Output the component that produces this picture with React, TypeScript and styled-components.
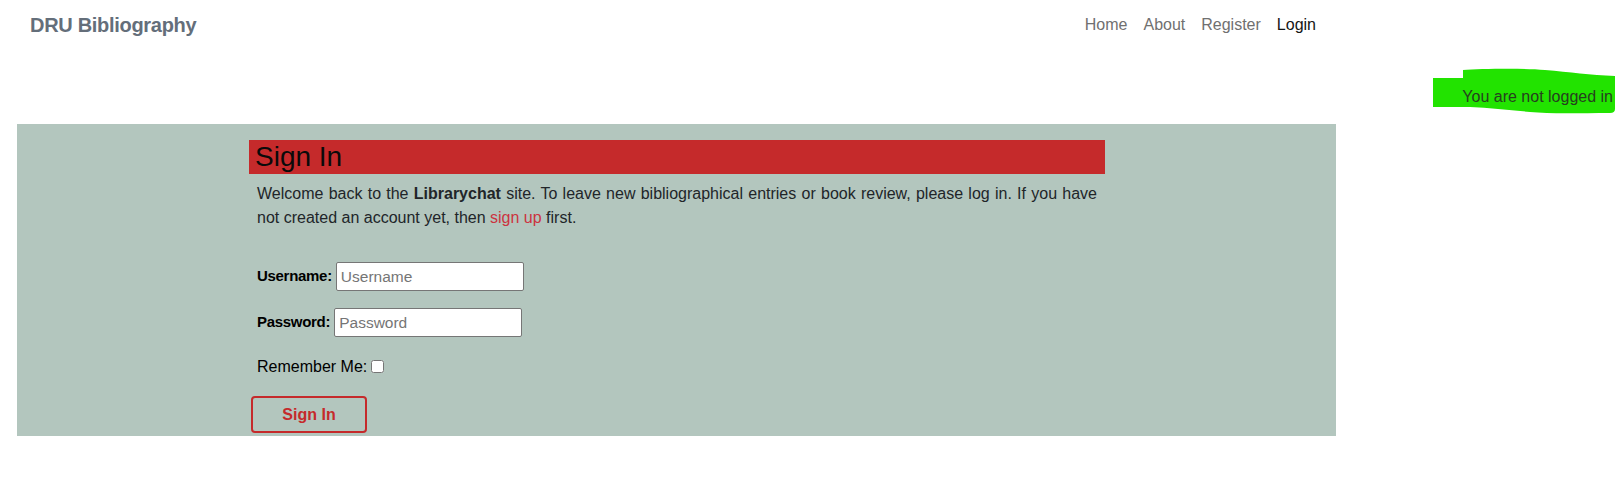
import React from "react";
import styled, { createGlobalStyle } from "styled-components";

const GlobalStyle = createGlobalStyle`
  html, body {
    margin: 0;
    padding: 0;
    background: #ffffff;
  }
  body {
    font-family: "Liberation Sans", Arial, sans-serif;
    font-size: 16px;
    line-height: 1.5;
    color: #212529;
  }
  * { box-sizing: border-box; }
`;

const Page = styled.div`
  width: 1623px;
  display: flex;
  flex-direction: column;
`;

const Navbar = styled.nav`
  width: 1336px;
  display: flex;
  justify-content: space-between;
  align-items: flex-start;
  padding: 10px 12px 16px 30px;
`;

const Brand = styled.a`
  font-size: 20px;
  line-height: 30px;
  font-weight: 700;
  letter-spacing: -0.3px;
  color: #646e7a;
  text-decoration: none;
`;

const NavList = styled.ul`
  list-style: none;
  margin: 3px 0 0;
  padding: 0;
  display: flex;
`;

const NavLink = styled.a<{ $active?: boolean }>`
  display: block;
  padding: 0 8px;
  font-size: 16px;
  line-height: 24px;
  color: ${(p) => (p.$active ? "#141414" : "#707070")};
  text-decoration: none;
`;

const StatusBar = styled.div`
  position: relative;
  display: flex;
  justify-content: flex-end;
  padding: 29px 10px 15px;
`;

const Highlight = styled.svg`
  position: absolute;
  right: 3px;
  top: 10px;
  width: 190px;
  height: 50px;
`;

const StatusText = styled.span`
  position: relative;
  font-size: 16px;
  line-height: 24px;
  color: #26401f;
`;

const Panel = styled.main`
  margin-left: 17px;
  width: 1319px;
  background: #b3c6be;
  padding: 16px 0 3px 232px;
`;

const Card = styled.section`
  width: 856px;
  display: flex;
  flex-direction: column;
`;

const Heading = styled.h3`
  margin: 0;
  background: #c52a2b;
  color: #0a0a0a;
  font-size: 28px;
  font-weight: 400;
  line-height: 34px;
  padding-left: 6px;
`;

const Intro = styled.p`
  margin: 8px 0 0;
  padding: 0 8px;
  font-size: 16px;
  line-height: 24px;
  text-align: justify;
  color: #212529;
`;

const RedLink = styled.a`
  color: #cc3340;
  text-decoration: none;
`;

const Form = styled.form`
  margin-top: 32px;
  display: flex;
  flex-direction: column;
  gap: 17px;
`;

const Row = styled.div`
  display: flex;
  align-items: center;
  gap: 4px;
  padding-left: 8px;
  min-height: 29px;
`;

const CheckRow = styled(Row)`
  min-height: 25px;
  line-height: 25px;
`;

const FieldLabel = styled.label<{ $bold?: boolean }>`
  font-size: ${(p) => (p.$bold ? "15px" : "16px")};
  font-weight: ${(p) => (p.$bold ? 700 : 400)};
  letter-spacing: ${(p) => (p.$bold ? "-0.3px" : "0")};
  color: #000000;
`;

const TextInput = styled.input`
  width: 188px;
  height: 29px;
  margin: 0;
  padding: 1px 4px;
  border: 1px solid #767676;
  border-radius: 2px;
  background: #ffffff;
  font-family: "Liberation Sans", Arial, sans-serif;
  font-size: 15.5px;
  color: #212529;
  &::placeholder {
    color: #757575;
  }
`;

const Checkbox = styled.input`
  width: 13px;
  height: 13px;
  margin: 0;
`;

const SubmitButton = styled.button`
  margin-left: 2px;
  width: 116px;
  height: 37px;
  border: 2px solid #c52a2b;
  border-radius: 4px;
  background: transparent;
  color: #c52a2b;
  font-family: "Liberation Sans", Arial, sans-serif;
  font-size: 16px;
  font-weight: 700;
  cursor: pointer;
`;

export default function App() {
  return (
    <>
      <GlobalStyle />
      <Page>
        <Navbar>
          <Brand href="#">DRU Bibliography</Brand>
          <NavList>
            <li><NavLink href="#">Home</NavLink></li>
            <li><NavLink href="#">About</NavLink></li>
            <li><NavLink href="#">Register</NavLink></li>
            <li><NavLink href="#" $active>Login</NavLink></li>
          </NavList>
        </Navbar>
        <StatusBar>
          <Highlight viewBox="0 0 190 50" preserveAspectRatio="none">
            <path
              d="M3,12 L33,12 L33,4 C50,3 90,2 115,4 C140,6 160,9 185,10 L185,43 Q185,47 180,47 C150,47 120,48 100,46 C80,44 60,42 40,41 L3,41 Z"
              fill="#22e300"
            />
          </Highlight>
          <StatusText>You are not logged in</StatusText>
        </StatusBar>
        <Panel>
          <Card>
            <Heading>Sign In</Heading>
            <Intro>
              Welcome back to the <strong>Librarychat</strong> site. To leave new
              bibliographical entries or book review, please log in. If you have{" "}
              {"not\u00a0created"} an account yet, then <RedLink href="#">sign up</RedLink>{" "}
              first.
            </Intro>
            <Form onSubmit={(e) => e.preventDefault()}>
              <Row>
                <FieldLabel $bold htmlFor="username">Username:</FieldLabel>
                <TextInput id="username" type="text" placeholder="Username" />
              </Row>
              <Row>
                <FieldLabel $bold htmlFor="password">Password:</FieldLabel>
                <TextInput id="password" type="password" placeholder="Password" />
              </Row>
              <CheckRow>
                <FieldLabel htmlFor="remember">Remember Me:</FieldLabel>
                <Checkbox id="remember" type="checkbox" />
              </CheckRow>
              <div>
                <SubmitButton type="submit">Sign In</SubmitButton>
              </div>
            </Form>
          </Card>
        </Panel>
      </Page>
    </>
  );
}
